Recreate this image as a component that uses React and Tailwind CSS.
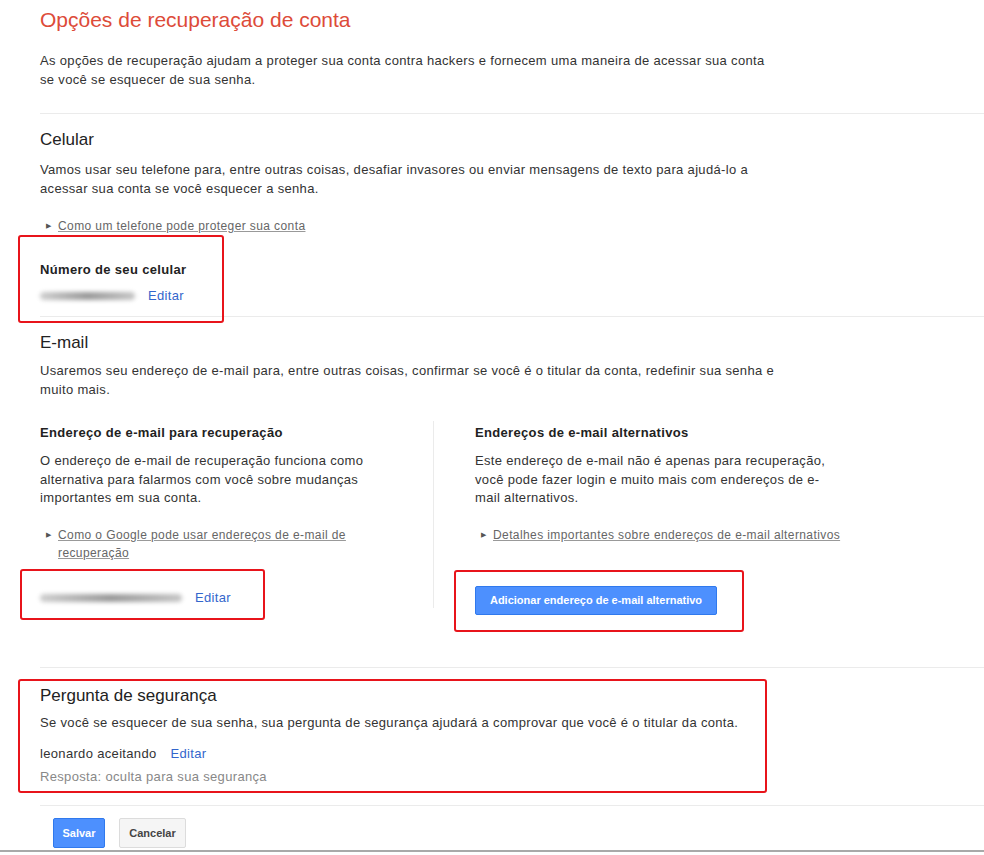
import React from 'react';

const Editar = () => (
  <a href="#" className="text-[#3366cc] text-[13px] tracking-[0.33px]">Editar</a>
);

const HelpLink = ({ children }) => (
  <div className="flex items-start text-[12px] leading-[18px] text-[#666] tracking-[0.4px]">
    <span className="w-[18px] pl-[6px] text-[7px] text-[#555]">▶</span>
    <a href="#" className="underline decoration-[#999]">{children}</a>
  </div>
);

// red annotation frame drawn over the content
const Mark = ({ className }) => (
  <div className={`absolute pointer-events-none border-[2.5px] border-[#e8141b] rounded-[3px] ${className}`} />
);

// blurred placeholder for hidden personal data
const Blurred = ({ width }) => (
  <div className={`h-[8px] ${width} rounded-full blur-[2px] bg-linear-to-r from-[#cfcfcf] via-[#999999] to-[#c6c6c6]`} />
);

const Divider = ({ className = '' }) => (
  <div className={`ml-10 border-t border-[#ebebeb] ${className}`} />
);

const App = () => {
  return (
    <div className="min-h-[855px] bg-white font-['Liberation_Sans',Arial,sans-serif] text-[13px] tracking-[0.33px] text-[#222]">
      <div className="pl-10 pt-[7px]">
        <h1 className="text-[21px] leading-[26px] tracking-normal text-[#dd4b39]">Opções de recuperação de conta</h1>
        <p className="mt-[18px] leading-[19px] text-[#333]">
          As opções de recuperação ajudam a proteger sua conta contra hackers e fornecem uma maneira de acessar sua conta
          <br />se você se esquecer de sua senha.
        </p>
      </div>

      <Divider className="mt-[24px]" />

      {/* Celular */}
      <div className="pl-10">
        <h2 className="mt-[15px] text-[17px] leading-[22px] tracking-normal text-[#222]">Celular</h2>
        <p className="mt-[10px] leading-[18.5px] text-[#333]">
          Vamos usar seu telefone para, entre outras coisas, desafiar invasores ou enviar mensagens de texto para ajudá-lo a
          <br />acessar sua conta se você esquecer a senha.
        </p>
        <div className="mt-[19px]">
          <HelpLink>Como um telefone pode proteger sua conta</HelpLink>
        </div>
        <div className="relative mt-[26px]">
          <Mark className="-top-[26px] -left-[22px] w-[206px] h-[88px]" />
          <div className="font-bold leading-[18px]">Número de seu celular</div>
          <div className="mt-[8px] flex items-center h-[18px]">
            <Blurred width="w-[95px]" />
            <span className="ml-[13px]"><Editar /></span>
          </div>
        </div>
      </div>

      <Divider className="mt-[11px]" />

      {/* E-mail */}
      <div className="pl-10">
        <h2 className="mt-[15px] text-[17px] leading-[22px] tracking-normal text-[#222]">E-mail</h2>
        <p className="mt-[8px] leading-[18.5px] text-[#333]">
          Usaremos seu endereço de e-mail para, entre outras coisas, confirmar se você é o titular da conta, redefinir sua senha e
          <br />muito mais.
        </p>

        <div className="mt-[22px] flex items-start">
          <div className="w-[394px] border-r border-[#ebebeb] pt-[3px] pb-[1px]">
            <div className="font-bold leading-[18px]">Endereço de e-mail para recuperação</div>
            <p className="mt-[10px] leading-[18.5px] text-[#333]">
              O endereço de e-mail de recuperação funciona como
              <br />alternativa para falarmos com você sobre mudanças
              <br />importantes em sua conta.
            </p>
            <div className="mt-[18px]">
              <HelpLink>
                Como o Google pode usar endereços de e-mail de
                <br />recuperação
              </HelpLink>
            </div>
            <div className="relative mt-[27px] flex items-center h-[18px]">
              <Mark className="-top-[20px] -left-[20px] w-[245px] h-[51px]" />
              <Blurred width="w-[142px]" />
              <span className="ml-[13px]"><Editar /></span>
            </div>
          </div>

          <div className="pl-[41px] pt-[3px]">
            <div className="font-bold leading-[18px]">Endereços de e-mail alternativos</div>
            <p className="mt-[10px] leading-[18.5px] text-[#333]">
              Este endereço de e-mail não é apenas para recuperação,
              <br />você pode fazer login e muito mais com endereços de e-
              <br />mail alternativos.
            </p>
            <div className="mt-[18px]">
              <HelpLink>Detalhes importantes sobre endereços de e-mail alternativos</HelpLink>
            </div>
            <div className="relative mt-[42px] w-fit">
              <Mark className="-top-[16px] -left-[21px] w-[290px] h-[62px]" />
              <button className="h-[29px] w-[242px] rounded-[2px] border border-[#3079ed] bg-[#4d90fe] text-[11px] font-bold tracking-normal text-white">
                Adicionar endereço de e-mail alternativo
              </button>
            </div>
          </div>
        </div>
      </div>

      <Divider className="mt-[52px]" />

      {/* Pergunta de segurança */}
      <div className="pl-10">
        <div className="relative mt-[17px]">
          <Mark className="-top-[6px] -left-[22px] w-[749px] h-[114px]" />
          <h2 className="text-[17px] leading-[22px] tracking-normal text-[#222]">Pergunta de segurança</h2>
          <p className="mt-[7px] leading-[18.5px] text-[#333]">
            Se você se esquecer de sua senha, sua pergunta de segurança ajudará a comprovar que você é o titular da conta.
          </p>
          <div className="mt-[13px] flex items-center leading-[18.5px] text-[#333]">
            <span>leonardo aceitando</span>
            <span className="ml-[14px]"><Editar /></span>
          </div>
          <div className="mt-[4px] leading-[18.5px] text-[#888]">Resposta: oculta para sua segurança</div>
        </div>
      </div>

      <Divider className="mt-[19px]" />

      <div className="pl-[53px] mt-[12px] flex gap-[14px]">
        <button className="h-[30px] w-[52px] rounded-[2px] border border-[#3079ed] bg-[#4d90fe] text-[11px] font-bold tracking-normal text-white">
          Salvar
        </button>
        <button className="h-[30px] w-[67px] rounded-[2px] border border-[#dcdcdc] bg-[#f5f5f5] text-[11px] font-bold tracking-normal text-[#444]">
          Cancelar
        </button>
      </div>

      <div className="mt-[2px] border-t-2 border-[#a9a9a9]" />
    </div>
  );
};

export default App;
